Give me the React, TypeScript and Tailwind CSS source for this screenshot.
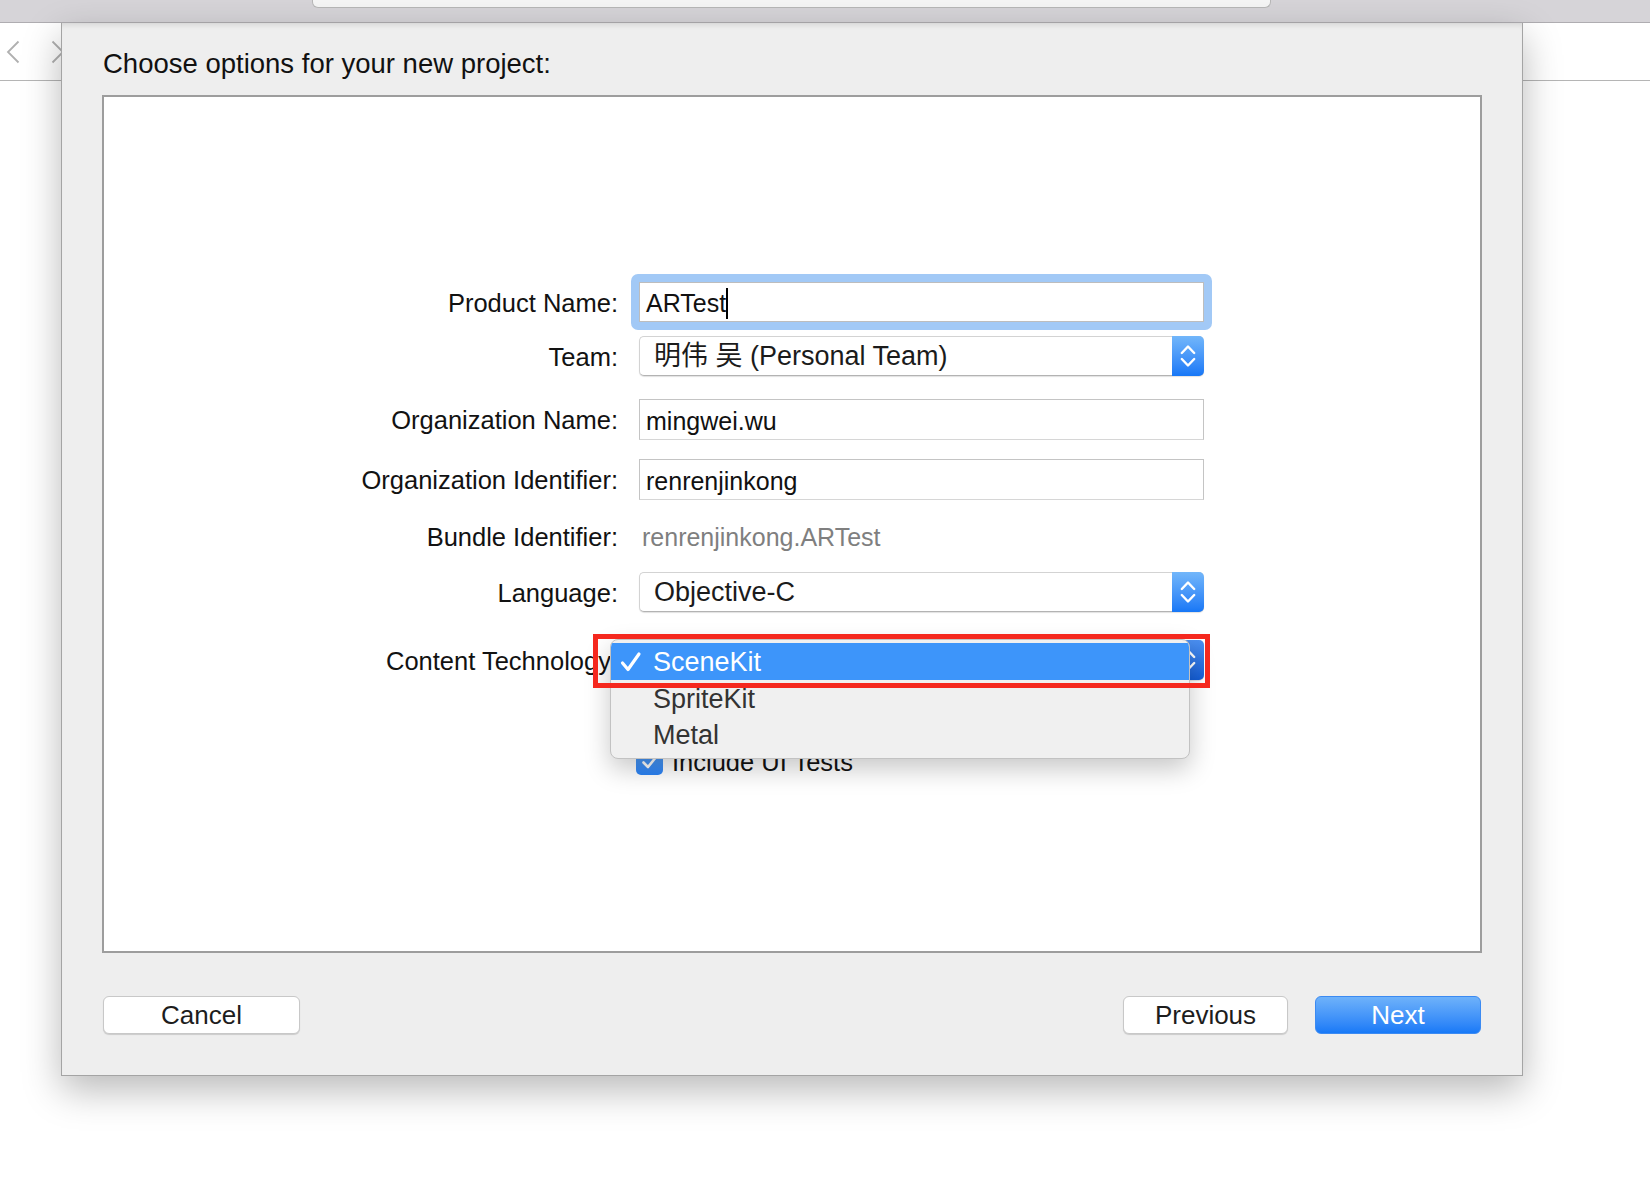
import React from "react";

const FONT = "font-['Liberation_Sans','Noto_Sans_CJK_SC',sans-serif]";

function Stepper({ pressed }: { pressed?: boolean }) {
  return (
    <div
      className={
        "-my-px w-[32px] rounded-r-[5px] flex items-center justify-center bg-gradient-to-b " +
        (pressed ? "from-[#4b8ff0] to-[#145ed6]" : "from-[#72b6fa] to-[#1677f6]")
      }
    >
      <svg width="16" height="24" viewBox="0 0 16 24" fill="none">
        <path d="M1.8 9 L8 2.5 L14.2 9" stroke="white" strokeWidth="2.4" strokeLinecap="round" strokeLinejoin="round" />
        <path d="M1.8 15 L8 21.5 L14.2 15" stroke="white" strokeWidth="2.4" strokeLinecap="round" strokeLinejoin="round" />
      </svg>
    </div>
  );
}

function PopUp({ value, pressed }: { value: string; pressed?: boolean }) {
  return (
    <div className="flex w-[565px] h-[40px] rounded-[5px] border border-r-0 border-[#d3d3d3] border-b-[#b3b3b3] bg-white shadow-[0_1px_1px_rgba(0,0,0,0.12)]">
      <div className="flex-1 flex items-center pl-[14px] pt-[1px] text-[27px] leading-none text-[#1b1b1b] whitespace-nowrap">
        {value}
      </div>
      <Stepper pressed={pressed} />
    </div>
  );
}

function TextField({ value }: { value: string }) {
  return (
    <div className="w-full h-[41px] flex items-center pl-[6px] pt-[3px] bg-white border border-[#c4c4c4] border-b-[#d6d6d6] text-[25px] leading-none text-[#111]">
      <span>{value}</span>
    </div>
  );
}

function Row({ label, mt, h, children }: { label: string; mt: string; h: string; children: React.ReactNode }) {
  return (
    <div className={"flex items-center " + mt + " " + h}>
      <div className="w-[514px] pt-[3px] text-right text-[25.5px] leading-none text-[#121212] whitespace-nowrap">{label}</div>
      <div className="ml-[21px] w-[565px]">{children}</div>
    </div>
  );
}

export default function App() {
  const options = ["SceneKit", "SpriteKit", "Metal"];

  return (
    <div className={"w-[1650px] h-[1196px] bg-white overflow-hidden flex flex-col " + FONT}>
      {/* window toolbar */}
      <div className="h-[23px] shrink-0 bg-[#d6d4d8] border-b border-[#afadb1]">
        <div className="ml-[312px] w-[959px] h-[8px] bg-[#f5f5f5] border border-t-0 border-[#b7b7b7] rounded-b-[6px]" />
      </div>

      <div className="relative flex-1">
        {/* window content behind the sheet */}
        <div className="h-[58px] flex items-center gap-[31px] pl-[6px] border-b border-[#b5b5b5]">
          <svg width="14" height="24" viewBox="0 0 14 24" fill="none">
            <path d="M12.5 1.5 L2 12 L12.5 22.5" stroke="#b0b0b0" strokeWidth="1.8" />
          </svg>
          <svg width="14" height="24" viewBox="0 0 14 24" fill="none">
            <path d="M1.5 1.5 L12 12 L1.5 22.5" stroke="#b0b0b0" strokeWidth="1.8" />
          </svg>
        </div>

        {/* sheet */}
        <div className="absolute left-[61px] top-0 w-[1462px] h-[1053px] bg-[#eeeeee] border-l border-b border-r border-[#a4a4a4] shadow-[0_14px_36px_rgba(0,0,0,0.28),inset_0_6px_6px_-5px_rgba(0,0,0,0.14)] px-[40px] pt-[24px] flex flex-col">
          <div className="h-[32px] flex items-center pl-[1px] pt-[2px] text-[27.5px] leading-none text-[#111]">
            Choose options for your new project:
          </div>

          <div className="relative mt-[16px] h-[858px] bg-white border-2 border-[#9d9d9d] flex flex-col">
            <Row label="Product Name:" mt="mt-[177px]" h="h-[56px]">
              <div className="-mx-[8px] p-[8px] rounded-[7px] bg-[#a2c9f6]">
                <div className="h-[40px] flex items-center pl-[6px] pt-[2px] bg-white border border-[#bdbdbd] text-[25px] leading-none text-[#111]">
                  <span>ARTest</span>
                  <span className="inline-block w-[2px] h-[31px] bg-black" />
                </div>
              </div>
            </Row>
            <Row label="Team:" mt="mt-[6px]" h="h-[40px]">
              <PopUp value="明伟 吴 (Personal Team)" />
            </Row>
            <Row label="Organization Name:" mt="mt-[23px]" h="h-[41px]">
              <TextField value="mingwei.wu" />
            </Row>
            <Row label="Organization Identifier:" mt="mt-[19px]" h="h-[41px]">
              <TextField value="renrenjinkong" />
            </Row>
            <Row label="Bundle Identifier:" mt="mt-[20px]" h="h-[32px]">
              <div className="pl-[3px] pt-[2px] text-[25px] leading-none text-[#7f7f7f]">renrenjinkong.ARTest</div>
            </Row>
            <Row label="Language:" mt="mt-[20px]" h="h-[40px]">
              <PopUp value="Objective-C" />
            </Row>
            <Row label="Content Technology:" mt="mt-[28px]" h="h-[40px]">
              <PopUp value="SceneKit" pressed />
            </Row>
            <div className="flex items-center mt-[68px] h-[27px]">
              <div className="ml-[532px] w-[27px] h-[27px] rounded-[5px] bg-gradient-to-b from-[#5aa4f8] to-[#2a82f4] flex items-center justify-center">
                <svg width="18" height="16" viewBox="0 0 18 16" fill="none">
                  <path d="M2.5 8.5 L7 13 L15.5 2.5" stroke="white" strokeWidth="2.6" strokeLinecap="round" strokeLinejoin="round" />
                </svg>
              </div>
              <span className="ml-[9px] pt-[2px] text-[25.5px] leading-none text-[#121212]">Include UI Tests</span>
            </div>

            {/* open pop-up menu */}
            <div className="absolute left-[506px] top-[542px] w-[580px] h-[120px] rounded-[8px] bg-[#f0f0f0] border border-[#c2c2c2] shadow-[0_10px_26px_rgba(0,0,0,0.22)] pt-[3px] overflow-hidden">
              {options.map((o, i) => (
                <div
                  key={o}
                  className={
                    "flex items-center text-[27px] leading-none " +
                    (i === 0 ? "h-[37px] bg-[#3d95fa] text-white" : "h-[36px] text-[#333]")
                  }
                >
                  <div className="w-[42px] pl-[9px] flex items-center">
                    {i === 0 && (
                      <svg width="22" height="22" viewBox="0 0 22 22" fill="none">
                        <path d="M2.5 12 L8 18.5 L19 3" stroke="white" strokeWidth="3.2" strokeLinecap="round" strokeLinejoin="round" />
                      </svg>
                    )}
                  </div>
                  <span className="pt-[2px]">{o}</span>
                </div>
              ))}
            </div>

            {/* red annotation box */}
            <div className="absolute left-[489px] top-[537px] w-[617px] h-[54px] border-[5px] border-[#f5281e] pointer-events-none" />
          </div>

          <div className="mt-[43px] h-[38px] flex items-center px-[1px]">
            <button className="w-[197px] h-[38px] bg-white rounded-[6px] border border-[#c8c8c8] shadow-[0_1px_1px_rgba(0,0,0,0.15)] text-[26px] leading-none text-[#1d1d1d]">
              Cancel
            </button>
            <div className="flex-1" />
            <button className="w-[165px] h-[38px] bg-white rounded-[6px] border border-[#c8c8c8] shadow-[0_1px_1px_rgba(0,0,0,0.15)] text-[26px] leading-none text-[#1d1d1d]">
              Previous
            </button>
            <button className="ml-[27px] w-[166px] h-[38px] rounded-[6px] border border-[#3b8af2] bg-gradient-to-b from-[#6eb2fa] to-[#1779f7] text-[26px] leading-none text-white">
              Next
            </button>
          </div>
        </div>
      </div>
    </div>
  );
}
